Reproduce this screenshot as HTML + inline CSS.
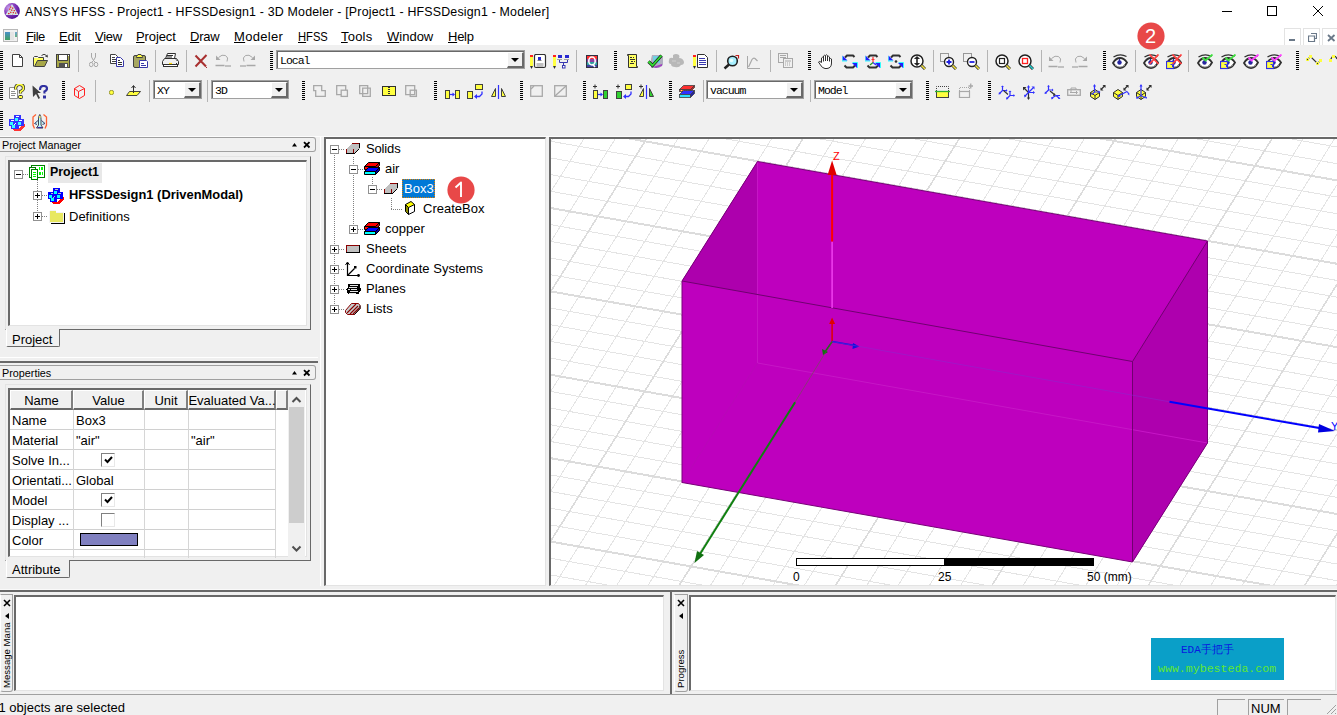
<!DOCTYPE html>
<html><head><meta charset="utf-8">
<style>
*{margin:0;padding:0;box-sizing:border-box}
html,body{width:1337px;height:715px;overflow:hidden;background:#f0f0f0;font-family:"Liberation Sans",sans-serif;color:#000}
.a{position:absolute}
.t{position:absolute;white-space:nowrap;font-size:13px;line-height:13px}
.menu u{text-decoration:underline;text-underline-offset:1px;text-decoration-thickness:1px}
.grip{position:absolute;width:3px;background:repeating-linear-gradient(#000 0 1px,transparent 1px 2px)}
.sep{position:absolute;width:2px;border-left:1px solid #a0a0a0;border-right:1px solid #fff}
.sunk{position:absolute;border:1px solid;border-color:#a0a0a0 #fff #fff #a0a0a0}
.sunk>div.in{position:absolute;left:0;top:0;right:0;bottom:0;border:1px solid;border-color:#696969 #e3e3e3 #e3e3e3 #696969;background:#fff}
.combo{position:absolute;background:#fff;border:1px solid;border-color:#808080 #fff #fff #808080;font-family:"Liberation Mono",monospace;font-size:12px}
.combo:before{content:"";position:absolute;left:0;top:0;right:0;bottom:0;border:1px solid;border-color:#404040 #e3e3e3 #e3e3e3 #404040}
.combo .btn{position:absolute;right:1px;top:1px;bottom:1px;width:16px;background:#f0f0f0;border:1px solid;border-color:#fff #404040 #404040 #fff}
.combo .btn:after{content:"";position:absolute;left:3px;top:5px;border-left:4px solid transparent;border-right:4px solid transparent;border-top:4px solid #000}
.combo span{position:absolute;left:3px;top:2px}
.hdr{position:absolute;border:1px solid #a0a0a0;border-radius:0 3px 3px 0;border-left:none;background:#f0f0f0;font-size:11.5px}
.tab{position:absolute;background:#f0f0f0;border:1px solid #a0a0a0;border-top:none;box-shadow:1px 1px 0 #696969;font-size:13px}
.pm{position:absolute;width:9px;height:9px;border:1px solid #919191;background:#fff}
.pm:before{content:"";position:absolute;left:1px;top:3px;width:5px;height:1px;background:#000}
.pm.p:after{content:"";position:absolute;left:3px;top:1px;width:1px;height:5px;background:#000}
.dv{position:absolute;width:1px;background:repeating-linear-gradient(#808080 0 1px,transparent 1px 2px)}
.dh{position:absolute;height:1px;background:repeating-linear-gradient(90deg,#808080 0 1px,transparent 1px 2px)}
</style></head>
<body>
<!-- TITLE BAR -->
<div class="a" style="left:0;top:0;width:1337px;height:45px;background:#fff"></div>
<div id="title">
<svg class="a" style="left:4px;top:3px" width="16" height="16" viewBox="0 0 16 16">
<defs><radialGradient id="ag" cx="30%" cy="30%" r="80%"><stop offset="0" stop-color="#c8a0e8"/><stop offset="0.45" stop-color="#8a40c0"/><stop offset="1" stop-color="#4a0890"/></radialGradient></defs>
<circle cx="8" cy="8" r="7.9" fill="url(#ag)"/>
<path d="M8 1L14.5 12H1.5Z" fill="#d0e8e8"/>
<path d="M7 3.5L5 8M9 4.5L6 11M10.5 7L8.5 11.5M12 9.5L11 11.5M5 10L4 12" stroke="#e02020" stroke-width="1.3" stroke-dasharray="1.3 1"/>
</svg>
<div class="t" style="left:25px;top:6px;font-size:12.4px;letter-spacing:0.19px;color:#000">ANSYS HFSS - Project1 - HFSSDesign1 - 3D Modeler - [Project1 - HFSSDesign1 - Modeler]</div>
<div class="a" style="left:1222px;top:11px;width:10px;height:1px;background:#000"></div>
<div class="a" style="left:1267px;top:6px;width:10px;height:10px;border:1px solid #000"></div>
<svg class="a" style="left:1313px;top:6px" width="10" height="10"><path d="M0 0L10 10M10 0L0 10" stroke="#000" stroke-width="1"/></svg>
<!-- menu -->
<svg class="a" style="left:3px;top:29px" width="15" height="13"><defs><linearGradient id="mg" x1="0" y1="0" x2="0" y2="1"><stop offset="0" stop-color="#4a90c8"/><stop offset="1" stop-color="#40a060"/></linearGradient></defs><rect x="0.5" y="0.5" width="14" height="12" fill="#f0f0f0" stroke="#b8b8b8"/><rect x="2" y="3" width="5" height="8" fill="url(#mg)"/><rect x="7" y="3" width="4" height="8" fill="#e4e4e4"/><rect x="12" y="3" width="2" height="5" fill="url(#mg)" opacity="0.8"/></svg>
<div class="t menu" style="left:26px;top:30px;letter-spacing:-0.6px"><u>F</u>ile</div>
<div class="t menu" style="left:59px;top:30px;letter-spacing:-0.15px"><u>E</u>dit</div>
<div class="t menu" style="left:95px;top:30px;letter-spacing:-0.3px"><u>V</u>iew</div>
<div class="t menu" style="left:136px;top:30px;letter-spacing:-0.1px"><u>P</u>roject</div>
<div class="t menu" style="left:190px;top:30px;letter-spacing:-0.2px"><u>D</u>raw</div>
<div class="t menu" style="left:234px;top:30px;letter-spacing:0.3px"><u>M</u>odeler</div>
<div class="t menu" style="left:298px;top:30px;transform:scaleX(0.86);transform-origin:0 0"><u>H</u>FSS</div>
<div class="t menu" style="left:341px;top:30px;letter-spacing:0.2px"><u>T</u>ools</div>
<div class="t menu" style="left:387px;top:30px;letter-spacing:0px"><u>W</u>indow</div>
<div class="t menu" style="left:448px;top:30px;letter-spacing:-0.25px"><u>H</u>elp</div>
<div class="a" style="left:1284px;top:28px;width:17px;height:17px;border:1px solid #e3e3e3;border-bottom:none"></div><div class="a" style="left:1303px;top:28px;width:17px;height:17px;border:1px solid #e3e3e3;border-bottom:none"></div><div class="a" style="left:1322px;top:28px;width:17px;height:17px;border:1px solid #e3e3e3;border-bottom:none"></div><div class="a" style="left:1289px;top:39px;width:6px;height:2px;background:#6a7888"></div>
<svg class="a" style="left:1308px;top:33px" width="9" height="9"><path d="M3 0.5h5.5v5h-2M0.5 3h6v5.5h-6z" fill="none" stroke="#6a7888" stroke-width="1.2"/></svg>
<svg class="a" style="left:1327px;top:34px" width="9" height="8"><path d="M1 1L7.5 7M7.5 1L1 7" stroke="#6a7888" stroke-width="1.8"/></svg>
</div>
<!-- TOOLBARS -->
<div class="grip" style="left:0px;top:51px;height:20px"></div><svg class="a" style="left:12px;top:54px" width="11" height="13" viewBox="0 0 11 13"><path d="M0.5 0.5H7.5L10.5 3.5V12.5H0.5Z" fill="#fff" stroke="#404040"/><path d="M7.5 0.5V3.5H10.5" fill="none" stroke="#404040"/></svg><svg class="a" style="left:33px;top:53px" width="16" height="14" viewBox="0 0 16 14"><path d="M0.5 13.5V4.5L1.5 3.5H4.5L5.5 4.5H10.5V7.5" fill="#f4f4f4" stroke="#404040"/><path d="M1 5H10V8H4L1 13Z" fill="#ffff60"/><path d="M1.5 13.5L4.5 7.5H14.5L11.5 13.5Z" fill="#a8a848" stroke="#404040"/><path d="M8.5 2.5Q11 0 13.5 2.5" fill="none" stroke="#404040"/><path d="M12 3.5L15 4.5L14.5 1.5Z" fill="#404040"/></svg><svg class="a" style="left:56px;top:54px" width="14" height="14" viewBox="0 0 14 14"><rect x="0.5" y="0.5" width="13" height="13" fill="#a8a848" stroke="#404040"/><rect x="2.5" y="0.5" width="9" height="6" fill="#fff" stroke="#404040"/><rect x="3" y="9" width="9" height="5" fill="#505050"/><rect x="9" y="10" width="2" height="3" fill="#fff"/><rect x="12" y="1" width="1" height="1" fill="#fff"/></svg><div class="a" style="left:78px;top:50px;width:1px;height:22px;background:#b4b4b4"></div><svg class="a" style="left:89px;top:53px" width="10" height="15" viewBox="0 0 10 15"><path d="M2.5 0V4L4.5 7.5L6.5 4V0" fill="none" stroke="#a8a8a8"/><path d="M4.5 7.5L2.5 9.5M4.5 7.5L6.5 9.5" stroke="#a8a8a8"/><ellipse cx="2.2" cy="11.5" rx="1.8" ry="2.2" fill="none" stroke="#a8a8a8"/><ellipse cx="7" cy="11.5" rx="1.8" ry="2.2" fill="none" stroke="#a8a8a8"/></svg><svg class="a" style="left:110px;top:54px" width="15" height="13" viewBox="0 0 15 13"><path d="M0.5 0.5H5.5L7.5 2.5V9.5H0.5Z" fill="#fff" stroke="#404040"/><path d="M2 3.5H5M2 5.5H6M2 7.5H6" stroke="#404040"/><path d="M6.5 3.5H10.5L13.5 6.5V12.5H6.5Z" fill="#fff" stroke="#3838a8"/><path d="M8 6.5H10M8 8.5H12M8 10.5H12" stroke="#303030"/></svg><svg class="a" style="left:133px;top:54px" width="15" height="14" viewBox="0 0 15 14"><rect x="0.5" y="1.5" width="12" height="12" rx="1.5" fill="#a8a860" stroke="#404040"/><path d="M3.5 3.5H9.5V2.5L8 0.5H5L3.5 2.5Z" fill="#ffff40" stroke="#404040"/><path d="M6.5 6.5H13.5L14.5 7.5V13.5H6.5Z" fill="#fff" stroke="#3838a8"/><path d="M8 9.5H11M8 11.5H13" stroke="#3838a8"/></svg><div class="a" style="left:155px;top:50px;width:1px;height:22px;background:#b4b4b4"></div><svg class="a" style="left:162px;top:53px" width="17" height="15" viewBox="0 0 17 15"><path d="M3.5 5.5L5.5 0.5H13.5L12.5 5.5" fill="#fff" stroke="#303030"/><path d="M5 2.5H11M4.5 4H10" stroke="#303030"/><path d="M0.5 11.5V8.5L2.5 5.5H14.5L16.5 8.5V11.5Z" fill="#f0f0f0" stroke="#303030"/><rect x="1.5" y="11.5" width="14" height="2" fill="#fff" stroke="#303030"/><path d="M7 10.5H10" stroke="#ffd800" stroke-width="1.2"/><path d="M14 6.5L15.5 8M14 10L15.5 11.5" stroke="#303030"/></svg><div class="a" style="left:186px;top:50px;width:1px;height:22px;background:#b4b4b4"></div><svg class="a" style="left:194px;top:54px" width="14" height="14" viewBox="0 0 14 14"><path d="M1.5 1.5L12 12.5M12.5 1L1.5 12.5" stroke="#a83030" stroke-width="2"/><rect x="12" y="13" width="1" height="1" fill="#a83030"/></svg><svg class="a" style="left:215px;top:54px" width="16" height="14" viewBox="0 0 16 14"><path d="M3.5 3.5Q7 0 10.5 1.5Q14 3.5 12 7.5" fill="none" stroke="#a8a8a8"/><path d="M1 1.5V6H5.5Z" fill="#a8a8a8"/><path d="M0.5 11.5H9.5M11 11V13M13 11V13M15 11V13" stroke="#a8a8a8" stroke-width="1.3"/></svg><svg class="a" style="left:240px;top:54px" width="16" height="14" viewBox="0 0 16 14"><path d="M12.5 3.5Q9 0 5.5 1.5Q2 3.5 4 7.5" fill="none" stroke="#a8a8a8"/><path d="M15 1.5V6H10.5Z" fill="#a8a8a8"/><path d="M6.5 11.5H15.5M1 11V13M3 11V13M5 11V13" stroke="#a8a8a8" stroke-width="1.3"/></svg><div class="grip" style="left:270px;top:51px;height:20px"></div><div class="a" style="left:276px;top:50px;width:249px;height:19px;background:#fff;border:1px solid #a0a0a0"><div class="a" style="left:0;top:0;right:0;bottom:0;border-left:1px solid #696969;border-top:1px solid #696969"></div><div class="a" style="left:3px;top:2.5px;font-family:'Liberation Mono',monospace;font-size:11.5px;line-height:14px;letter-spacing:-1px">Local</div><div class="a" style="right:0;top:1px;width:17px;bottom:0;background:#f0f0f0;border-right:2px solid #696969;border-bottom:2px solid #696969;border-left:1px solid #fff;border-top:1px solid #fff"></div><div class="a" style="right:5px;top:7px;border-left:4px solid transparent;border-right:4px solid transparent;border-top:4px solid #000;width:0;height:0"></div></div><svg class="a" style="left:530px;top:54px" width="17" height="15" viewBox="0 0 17 15"><rect x="0" y="1" width="3" height="2" fill="#ff2020"/><rect x="0" y="3" width="3" height="9" fill="#ffff40"/><path d="M0 12H3L1.5 15Z" fill="#303030"/><rect x="4.5" y="0.5" width="11" height="13" rx="1.5" fill="#fff" stroke="#303030" stroke-width="1.2"/><rect x="8" y="3" width="3" height="3" fill="#2828d0"/><rect x="7.5" y="6" width="4" height="1" fill="#808080"/><path d="M6.5 10H13.5M6.5 12H13.5" stroke="#808080"/></svg><svg class="a" style="left:553px;top:54px" width="17" height="15" viewBox="0 0 17 15"><rect x="0" y="1" width="3" height="2" fill="#ff2020"/><rect x="0" y="3" width="3" height="9" fill="#ffff40"/><path d="M0 12H3L1.5 15Z" fill="#303030"/><rect x="5" y="1" width="4" height="3" fill="#2828d0"/><rect x="12" y="1" width="4" height="3" fill="#2828d0"/><path d="M4 5.5H9M11 5.5H16" stroke="#a0a0a0"/><path d="M6.5 6V8.5H14.5V6M10.5 8.5V11" fill="none" stroke="#3838b0"/><rect x="9.5" y="11.5" width="2.5" height="2.5" fill="#fff" stroke="#3838b0"/></svg><div class="a" style="left:576px;top:50px;width:1px;height:22px;background:#b4b4b4"></div><svg class="a" style="left:586px;top:55px" width="12" height="13" viewBox="0 0 12 13"><rect x="0" y="0" width="12" height="13" fill="#303040"/><rect x="1" y="1" width="10" height="3" fill="#ff3030"/><rect x="1" y="4" width="10" height="3" fill="#9040a0"/><rect x="1" y="7" width="10" height="3" fill="#30a0a0"/><rect x="1" y="10" width="10" height="2" fill="#4040a0"/><ellipse cx="6" cy="6" rx="3.2" ry="4" fill="none" stroke="#fff" stroke-width="1.6"/><path d="M6.5 9L9 12" stroke="#fff" stroke-width="1.6"/></svg><div class="grip" style="left:614px;top:51px;height:20px"></div><svg class="a" style="left:626px;top:54px" width="13" height="15" viewBox="0 0 13 15"><path d="M1.5 0.5H10.5V12.5H11.5V13.5H2.5V1.5H1.5Z" fill="#ffff60" stroke="#303030"/><path d="M4 3.5H6M7 3.5H8M4 5.5H9M5 7.5H7M8 7.5H9M4 9.5H8" stroke="#303030"/></svg><svg class="a" style="left:647px;top:54px" width="17" height="15" viewBox="0 0 17 15"><path d="M5 1H14L16 3V11L12 14H4V5Z" fill="#b0b0c0"/><path d="M6 2H13V9H6Z" fill="#70d0e0"/><path d="M6 13L15 10V12L9 14Z" fill="#a040c0"/><path d="M1.5 7.5L5.5 11.5L14.5 1.5" fill="none" stroke="#202020" stroke-width="3.2"/><path d="M1.5 7.5L5.5 11.5L14.5 1.5" fill="none" stroke="#30e030" stroke-width="1.8"/></svg><svg class="a" style="left:668px;top:53px" width="17" height="15" viewBox="0 0 17 15"><path d="M5 2Q8 0 11 2Q12 4 11 5Q15 5 16 9Q16 12 13 12Q11 15 7 14Q3 14 3 11Q0 11 1 7Q1 4 5 5Z" fill="#b8b8b8"/><path d="M4 8H8M9 10H12" stroke="#d0d0d0"/></svg><svg class="a" style="left:693px;top:54px" width="16" height="15" viewBox="0 0 16 15"><rect x="0" y="1" width="3" height="2" fill="#ff2020"/><rect x="0" y="3" width="3" height="9" fill="#ffff40"/><path d="M0 12H3L1.5 15Z" fill="#303030"/><path d="M4.5 0.5H11.5L14.5 3.5V13.5H4.5Z" fill="#fff" stroke="#303030"/><path d="M6 4.5H12M6 6.5H13M6 8.5H13M6 10.5H13" stroke="#3838b0"/></svg><div class="a" style="left:716px;top:50px;width:1px;height:22px;background:#b4b4b4"></div><svg class="a" style="left:723px;top:55px" width="17" height="15" viewBox="0 0 17 15"><circle cx="9.5" cy="6" r="4.8" fill="#a8f0ff" stroke="#202020" stroke-width="1.6"/><circle cx="8.5" cy="5.5" r="1.8" fill="#e8ffff"/><path d="M6 9.5L1.5 13.5" stroke="#202020" stroke-width="2.4"/><path d="M12.5 0.5H15.5V3.5" fill="none" stroke="#c02020" stroke-width="1.2"/></svg><svg class="a" style="left:747px;top:56px" width="14" height="13" viewBox="0 0 14 13"><path d="M0.5 0V12.5H13" fill="none" stroke="#a8a8a8"/><path d="M1.5 11L5 3.5Q6.5 1.5 8 2.5L10.5 5" fill="none" stroke="#a8a8a8" stroke-width="1.2"/></svg><div class="a" style="left:770px;top:50px;width:1px;height:22px;background:#b4b4b4"></div><svg class="a" style="left:778px;top:53px" width="15" height="15" viewBox="0 0 15 15"><rect x="0.5" y="0.5" width="9" height="9" fill="#f0f0f0" stroke="#a8a8a8"/><path d="M2 2.5H8M2 4.5H8" stroke="#a8a8a8"/><rect x="5.5" y="5.5" width="9" height="9" fill="#f0f0f0" stroke="#a8a8a8"/><path d="M7 8H13M7 10H8M9 10H10M11 10H12M7 12H8M9 12H10M11 12H12" stroke="#a8a8a8"/></svg><div class="grip" style="left:808px;top:51px;height:20px"></div><svg class="a" style="left:818px;top:54px" width="15" height="16" viewBox="0 0 15 16"><path d="M3.5 8.5V4Q4.5 2.5 5.5 4V2Q6.5 0.5 7.5 2V1.5Q8.5 0 9.5 1.5V3Q10.5 1.5 11.5 3V5Q12.5 4 13.5 5V9Q13.5 14 9 14.5H7Q4 14 2.5 11L0.5 8Q1.5 6.5 3.5 8.5Z" fill="#fff" stroke="#303030"/><path d="M5.5 4V7.5M7.5 2V7M9.5 3V7M11.5 5V7.5" stroke="#303030"/></svg><svg class="a" style="left:842px;top:54px" width="16" height="15" viewBox="0 0 16 15"><path d="M3 3.5L5 1.5H11L12.5 3" fill="none" stroke="#303030" stroke-width="2"/><path d="M0.5 1.5V6.5H5.5Z" fill="#2020ff"/><path d="M0 2V7H5" fill="none" stroke="#00ffff" stroke-width="0.8"/><path d="M2.5 11.5L4.5 13.5H11L13 11.5" fill="none" stroke="#303030" stroke-width="2"/><path d="M15 14V9H10Z" fill="#2020ff"/><path d="M15.5 14V8.5H10.5" fill="none" stroke="#00ffff" stroke-width="0.8"/></svg><svg class="a" style="left:865px;top:54px" width="16" height="15" viewBox="0 0 16 15"><path d="M3 3.5L5 1.5H11L12.5 3" fill="none" stroke="#303030" stroke-width="2"/><path d="M0.5 1.5V6.5H5.5Z" fill="#2020ff"/><path d="M0 2V7H5" fill="none" stroke="#00ffff" stroke-width="0.8"/><path d="M2.5 11.5L4.5 13.5H11L13 11.5" fill="none" stroke="#303030" stroke-width="2"/><path d="M15 14V9H10Z" fill="#2020ff"/><path d="M15.5 14V8.5H10.5" fill="none" stroke="#00ffff" stroke-width="0.8"/><path d="M8 3V8.5" stroke="#ff3030" stroke-width="1.2"/><path d="M6.5 5.5H9.5" stroke="#ff3030"/><path d="M8 8.5L5 11" stroke="#20a020" stroke-width="1.2"/><path d="M8 8.5L11 11" stroke="#3030ff" stroke-width="1.2"/></svg><svg class="a" style="left:888px;top:54px" width="16" height="15" viewBox="0 0 16 15"><path d="M3 3.5L5 1.5H11L12.5 3" fill="none" stroke="#303030" stroke-width="2"/><path d="M0.5 1.5V6.5H5.5Z" fill="#2020ff"/><path d="M0 2V7H5" fill="none" stroke="#00ffff" stroke-width="0.8"/><path d="M2.5 11.5L4.5 13.5H11L13 11.5" fill="none" stroke="#303030" stroke-width="2"/><path d="M15 14V9H10Z" fill="#2020ff"/><path d="M15.5 14V8.5H10.5" fill="none" stroke="#00ffff" stroke-width="0.8"/><circle cx="8" cy="7.5" r="1.3" fill="#303030"/></svg><svg class="a" style="left:910px;top:54px" width="16" height="16" viewBox="0 0 16 16"><circle cx="7" cy="7" r="6" fill="#fff" stroke="#202020" stroke-width="1.5"/><path d="M7 3V11" stroke="#202020" stroke-width="1.6"/><path d="M4.5 5L7 2.5L9.5 5M4.5 9L7 11.5L9.5 9" fill="#202020" stroke="#202020"/><path d="M11.5 11.5L15 15" stroke="#303030" stroke-width="3"/><path d="M11.5 11.5L15 15" stroke="#f0e040" stroke-width="1.6"/></svg><div class="a" style="left:933px;top:50px;width:1px;height:22px;background:#b4b4b4"></div><svg class="a" style="left:940px;top:53px" width="17" height="17" viewBox="0 0 17 17"><rect x="0.5" y="0.5" width="8" height="8" fill="none" stroke="#404040" stroke-dasharray="1 1"/><circle cx="9" cy="9" r="4.5" fill="#fff" stroke="#202020" stroke-width="1.4"/><path d="M6.5 9H11.5M9 6.5V11.5" stroke="#2020e0" stroke-width="1.8"/><path d="M12.5 12.5L16 16" stroke="#303030" stroke-width="3"/><path d="M12.5 12.5L16 16" stroke="#f0e040" stroke-width="1.6"/></svg><svg class="a" style="left:963px;top:53px" width="17" height="17" viewBox="0 0 17 17"><rect x="0.5" y="0.5" width="8" height="8" fill="none" stroke="#404040" stroke-dasharray="1 1"/><circle cx="9" cy="9" r="4.5" fill="#fff" stroke="#202020" stroke-width="1.4"/><path d="M6.5 9H11.5" stroke="#2020e0" stroke-width="1.8"/><path d="M12.5 12.5L16 16" stroke="#303030" stroke-width="3"/><path d="M12.5 12.5L16 16" stroke="#f0e040" stroke-width="1.6"/></svg><div class="a" style="left:987px;top:50px;width:1px;height:22px;background:#b4b4b4"></div><svg class="a" style="left:995px;top:54px" width="16" height="16" viewBox="0 0 16 16"><circle cx="7" cy="7" r="6" fill="#fff" stroke="#202020" stroke-width="1.5"/><rect x="4.5" y="4.5" width="5" height="5" fill="none" stroke="#202020" stroke-width="1.2"/><path d="M11.5 11.5L15 15" stroke="#303030" stroke-width="3"/><path d="M11.5 11.5L15 15" stroke="#f0e040" stroke-width="1.6"/></svg><svg class="a" style="left:1018px;top:54px" width="16" height="16" viewBox="0 0 16 16"><circle cx="7" cy="7" r="6" fill="#fff" stroke="#202020" stroke-width="1.5"/><rect x="4.5" y="4.5" width="5" height="5" fill="none" stroke="#ff2020" stroke-width="1.3"/><path d="M11.5 11.5L15 15" stroke="#303030" stroke-width="3"/><path d="M11.5 11.5L15 15" stroke="#20d0d0" stroke-width="1.6"/></svg><div class="a" style="left:1041px;top:50px;width:1px;height:22px;background:#b4b4b4"></div><svg class="a" style="left:1048px;top:55px" width="16" height="14" viewBox="0 0 16 14"><path d="M3.5 3.5Q7 0 10.5 1.5Q14 3.5 12 7.5" fill="none" stroke="#a8a8a8"/><path d="M1 1.5V6H5.5Z" fill="#a8a8a8"/><path d="M0.5 11.5H9.5M11 11V13M13 11V13M15 11V13" stroke="#a8a8a8" stroke-width="1.3"/></svg><svg class="a" style="left:1072px;top:55px" width="16" height="14" viewBox="0 0 16 14"><path d="M12.5 3.5Q9 0 5.5 1.5Q2 3.5 4 7.5" fill="none" stroke="#a8a8a8"/><path d="M15 1.5V6H10.5Z" fill="#a8a8a8"/><path d="M6.5 11.5H15.5M1 11V13M3 11V13M5 11V13" stroke="#a8a8a8" stroke-width="1.3"/></svg><div class="grip" style="left:1103px;top:51px;height:20px"></div><svg class="a" style="left:1112px;top:54px" width="17" height="16" viewBox="0 0 17 16"><path d="M1.5 3Q8 -1 14.5 2.5" fill="none" stroke="#303030" stroke-width="1.4"/><path d="M1 9Q4 4 8 4Q12 4 15 8.5Q12 14 8 14Q4 14 1 9Z" fill="#fff" stroke="#303030" stroke-width="1.8"/><path d="M3 11Q8 15 13 11" fill="none" stroke="#a0a0a0"/><circle cx="7.5" cy="8.5" r="2.2" fill="#2828a0"/><path d="M7.5 5V8" stroke="#2828a0" stroke-width="1.2"/></svg><div class="a" style="left:1135px;top:50px;width:1px;height:22px;background:#b4b4b4"></div><svg class="a" style="left:1143px;top:54px" width="17" height="16" viewBox="0 0 17 16"><path d="M1.5 3Q8 -1 14.5 2.5" fill="none" stroke="#303030" stroke-width="1.4"/><path d="M1 9Q4 4 8 4Q12 4 15 8.5Q12 14 8 14Q4 14 1 9Z" fill="#fff" stroke="#303030" stroke-width="1.8"/><path d="M3 11Q8 15 13 11" fill="none" stroke="#a0a0a0"/><circle cx="7.5" cy="8.5" r="2.2" fill="#2828a0"/><path d="M7.5 5V8" stroke="#2828a0" stroke-width="1.2"/><path d="M6.5 0.5L15.5 10M15.5 0.5L6.5 10" stroke="#ff4040" stroke-width="1.8"/></svg><svg class="a" style="left:1166px;top:54px" width="17" height="16" viewBox="0 0 17 16"><path d="M1.5 3Q8 -1 14.5 2.5" fill="none" stroke="#303030" stroke-width="1.4"/><path d="M1 9Q4 4 8 4Q12 4 15 8.5Q12 14 8 14Q4 14 1 9Z" fill="#fff" stroke="#303030" stroke-width="1.8"/><path d="M3 11Q8 15 13 11" fill="none" stroke="#a0a0a0"/><circle cx="7.5" cy="8.5" r="2.2" fill="#2828a0"/><path d="M7.5 5V8" stroke="#2828a0" stroke-width="1.2"/><rect x="0.5" y="7.5" width="7" height="7" fill="#ffff40" stroke="#3030e0" stroke-width="1.2"/><rect x="2" y="9" width="2.5" height="2.5" fill="#3030e0" opacity="0"/><path d="M4.5 10.5H6.5V13" fill="none" stroke="#3030e0"/><path d="M6.5 0.5L15.5 10M15.5 0.5L6.5 10" stroke="#ff4040" stroke-width="1.8"/></svg><div class="a" style="left:1188px;top:50px;width:1px;height:22px;background:#b4b4b4"></div><svg class="a" style="left:1197px;top:54px" width="17" height="16" viewBox="0 0 17 16"><path d="M1.5 3Q8 -1 14.5 2.5" fill="none" stroke="#303030" stroke-width="1.4"/><path d="M1 9Q4 4 8 4Q12 4 15 8.5Q12 14 8 14Q4 14 1 9Z" fill="#fff" stroke="#303030" stroke-width="1.8"/><path d="M3 11Q8 15 13 11" fill="none" stroke="#a0a0a0"/><circle cx="7.5" cy="8.5" r="2.2" fill="#2828a0"/><path d="M7.5 5V8" stroke="#2828a0" stroke-width="1.2"/><path d="M5.5 3.5L8.5 6.5L15.5 0.5" fill="none" stroke="#40e040" stroke-width="1.8"/></svg><svg class="a" style="left:1220px;top:54px" width="17" height="16" viewBox="0 0 17 16"><path d="M1.5 3Q8 -1 14.5 2.5" fill="none" stroke="#303030" stroke-width="1.4"/><path d="M1 9Q4 4 8 4Q12 4 15 8.5Q12 14 8 14Q4 14 1 9Z" fill="#fff" stroke="#303030" stroke-width="1.8"/><path d="M3 11Q8 15 13 11" fill="none" stroke="#a0a0a0"/><circle cx="7.5" cy="8.5" r="2.2" fill="#2828a0"/><path d="M7.5 5V8" stroke="#2828a0" stroke-width="1.2"/><rect x="0.5" y="7.5" width="7" height="7" fill="#ffff40" stroke="#3030e0" stroke-width="1.2"/><rect x="2" y="9" width="2.5" height="2.5" fill="#3030e0" opacity="0"/><path d="M4.5 10.5H6.5V13" fill="none" stroke="#3030e0"/><path d="M5.5 3.5L8.5 6.5L15.5 0.5" fill="none" stroke="#40e040" stroke-width="1.8"/></svg><svg class="a" style="left:1243px;top:54px" width="17" height="16" viewBox="0 0 17 16"><path d="M1.5 3Q8 -1 14.5 2.5" fill="none" stroke="#303030" stroke-width="1.4"/><path d="M1 9Q4 4 8 4Q12 4 15 8.5Q12 14 8 14Q4 14 1 9Z" fill="#fff" stroke="#303030" stroke-width="1.8"/><path d="M3 11Q8 15 13 11" fill="none" stroke="#a0a0a0"/><circle cx="7.5" cy="8.5" r="2.2" fill="#2828a0"/><path d="M7.5 5V8" stroke="#2828a0" stroke-width="1.2"/><path d="M5.5 3.5L8.5 6.5L15.5 0.5" fill="none" stroke="#ff40ff" stroke-width="1.8"/></svg><svg class="a" style="left:1266px;top:54px" width="17" height="16" viewBox="0 0 17 16"><path d="M1.5 3Q8 -1 14.5 2.5" fill="none" stroke="#303030" stroke-width="1.4"/><path d="M1 9Q4 4 8 4Q12 4 15 8.5Q12 14 8 14Q4 14 1 9Z" fill="#fff" stroke="#303030" stroke-width="1.8"/><path d="M3 11Q8 15 13 11" fill="none" stroke="#a0a0a0"/><circle cx="7.5" cy="8.5" r="2.2" fill="#2828a0"/><path d="M7.5 5V8" stroke="#2828a0" stroke-width="1.2"/><rect x="0.5" y="7.5" width="7" height="7" fill="#ffff40" stroke="#3030e0" stroke-width="1.2"/><rect x="2" y="9" width="2.5" height="2.5" fill="#3030e0" opacity="0"/><path d="M4.5 10.5H6.5V13" fill="none" stroke="#3030e0"/><path d="M5.5 3.5L8.5 6.5L15.5 0.5" fill="none" stroke="#ff40ff" stroke-width="1.8"/></svg><div class="grip" style="left:1296px;top:51px;height:20px"></div><svg class="a" style="left:1306px;top:55px" width="16" height="11" viewBox="0 0 16 11"><path d="M1.5 4.5L4.5 1.5L11.5 8.5L14.5 5.5" fill="none" stroke="#303030" stroke-width="1.2"/><rect x="0" y="3" width="3" height="3" fill="#ffff40"/><rect x="3" y="0" width="3" height="3" fill="#ffff40"/><rect x="10" y="7" width="3" height="3" fill="#ffff40"/><rect x="13" y="4" width="3" height="3" fill="#ffff40"/><circle cx="1.5" cy="4.5" r="0.7" fill="#303030"/><circle cx="11.5" cy="8.5" r="0.7" fill="#303030"/></svg><svg class="a" style="left:1329px;top:55px" width="8" height="11" viewBox="0 0 8 11"><path d="M1.5 5Q3 1 5 1Q7 1 8 4" fill="none" stroke="#303030" stroke-width="1.2"/><rect x="0" y="4" width="3" height="3" fill="#ffff40"/><rect x="3" y="0" width="3" height="3" fill="#ffff40"/></svg><div class="grip" style="left:0px;top:81px;height:20px"></div><svg class="a" style="left:9px;top:84px" width="16" height="16" viewBox="0 0 16 16"><path d="M0.5 3.5H6.5L8.5 5.5V14.5H0.5Z" fill="#fff" stroke="#909090"/><path d="M2 7.5H6M2 9.5H7M2 11.5H6" stroke="#909090"/><path d="M6.5 5.5Q6.5 0.5 10.5 0.5Q14.5 0.5 14.5 4Q14.5 6.5 11.5 7.5V9.5" fill="none" stroke="#303030" stroke-width="3.2"/><path d="M6.5 5.5Q6.5 0.5 10.5 0.5Q14.5 0.5 14.5 4Q14.5 6.5 11.5 7.5V9.5" fill="none" stroke="#ffff40" stroke-width="1.6"/><rect x="9.5" y="11.5" width="4" height="3" rx="1" fill="#ffff40" stroke="#303030"/></svg><svg class="a" style="left:32px;top:85px" width="16" height="15" viewBox="0 0 16 15"><path d="M0.5 0.5L9 8H5.5L8 13L6.5 14L4 9L1 12Z" fill="#404040"/><path d="M8 5Q8 1 11.5 1Q15 1 15 3.5Q15 5.5 12.5 6.5V8.5" fill="none" stroke="#3030a0" stroke-width="2.2"/><rect x="11" y="10.5" width="3" height="3" fill="#3030a0"/></svg><div class="grip" style="left:62px;top:81px;height:20px"></div><svg class="a" style="left:74px;top:85px" width="12" height="14" viewBox="0 0 12 14"><path d="M0.5 3.5L5.5 0.5L10.5 3.5V10.5L5.5 13.5L0.5 10.5Z M0.5 3.5L4.5 6.5L10.5 3.5 M4.5 6.5V13" fill="none" stroke="#ff2020"/></svg><div class="a" style="left:95px;top:80px;width:1px;height:22px;background:#b4b4b4"></div><svg class="a" style="left:109px;top:90px" width="5" height="5" viewBox="0 0 5 5"><circle cx="2.5" cy="2.5" r="2.2" fill="#ffff40" stroke="#606000" stroke-width="0.6"/></svg><svg class="a" style="left:126px;top:85px" width="15" height="11" viewBox="0 0 15 11"><path d="M3.5 6.5H14.5L11 10.5H0.5Z" fill="#ffff40" stroke="#303030" stroke-width="0.9"/><path d="M7.5 8V1" stroke="#303030"/><path d="M5.5 3L7.5 0.5L9.5 3" fill="none" stroke="#303030"/></svg><div class="a" style="left:149px;top:80px;width:1px;height:22px;background:#b4b4b4"></div><div class="a" style="left:153px;top:80px;width:49px;height:19px;background:#fff;border:1px solid #a0a0a0"><div class="a" style="left:0;top:0;right:0;bottom:0;border-left:1px solid #696969;border-top:1px solid #696969"></div><div class="a" style="left:3px;top:2.5px;font-family:'Liberation Mono',monospace;font-size:11.5px;line-height:14px;letter-spacing:-1px">XY</div><div class="a" style="right:0;top:1px;width:17px;bottom:0;background:#f0f0f0;border-right:2px solid #696969;border-bottom:2px solid #696969;border-left:1px solid #fff;border-top:1px solid #fff"></div><div class="a" style="right:5px;top:7px;border-left:4px solid transparent;border-right:4px solid transparent;border-top:4px solid #000;width:0;height:0"></div></div><div class="a" style="left:207px;top:80px;width:1px;height:22px;background:#b4b4b4"></div><div class="a" style="left:211px;top:80px;width:78px;height:19px;background:#fff;border:1px solid #a0a0a0"><div class="a" style="left:0;top:0;right:0;bottom:0;border-left:1px solid #696969;border-top:1px solid #696969"></div><div class="a" style="left:3px;top:2.5px;font-family:'Liberation Mono',monospace;font-size:11.5px;line-height:14px;letter-spacing:-1px">3D</div><div class="a" style="right:0;top:1px;width:17px;bottom:0;background:#f0f0f0;border-right:2px solid #696969;border-bottom:2px solid #696969;border-left:1px solid #fff;border-top:1px solid #fff"></div><div class="a" style="right:5px;top:7px;border-left:4px solid transparent;border-right:4px solid transparent;border-top:4px solid #000;width:0;height:0"></div></div><div class="grip" style="left:302px;top:81px;height:20px"></div><svg class="a" style="left:313px;top:85px" width="14" height="13" viewBox="0 0 14 13"><path d="M0.7 0.7H8.7V5.7H12.3V11.3H2.7V5.7H0.7Z" stroke="#a8a8a8" stroke-width="1.3" fill="none"/></svg><svg class="a" style="left:336px;top:85px" width="13" height="13" viewBox="0 0 13 13"><path d="M0.7 0.7H9.7V9.7H0.7Z" stroke="#a8a8a8" stroke-width="1.3" fill="none"/><rect x="5.2" y="5.2" width="6.2" height="6.2" fill="#f0f0f0" stroke="#a8a8a8" stroke-width="1.3"/></svg><svg class="a" style="left:359px;top:85px" width="13" height="13" viewBox="0 0 13 13"><path d="M0.7 0.7H8.7V8.7H0.7Z M3.7 3.2H11.3V11.3H3.7Z" stroke="#a8a8a8" stroke-width="1.3" fill="none"/></svg><svg class="a" style="left:382px;top:86px" width="14" height="10" viewBox="0 0 14 10"><rect x="0.5" y="0.5" width="13" height="9" fill="#ffff40" stroke="#303030"/><path d="M6.5 1V9M7.5 1V9" stroke="#303030" stroke-dasharray="1 1"/></svg><svg class="a" style="left:405px;top:85px" width="13" height="13" viewBox="0 0 13 13"><path d="M0.7 0.7H9.7V9.7H0.7Z" stroke="#a8a8a8" stroke-width="1.3" fill="none"/><rect x="5.2" y="5.2" width="6.2" height="6.2" fill="none" stroke="#a8a8a8" stroke-width="1.3"/></svg><div class="grip" style="left:434px;top:81px;height:20px"></div><svg class="a" style="left:445px;top:90px" width="15" height="9" viewBox="0 0 15 9"><rect x="0.5" y="0.5" width="4" height="8" fill="#ffff40" stroke="#404040"/><rect x="10.5" y="0.5" width="4" height="8" fill="#ffff40" stroke="#404040"/><path d="M5 4.5H9" stroke="#3030ff" stroke-width="1.2"/><path d="M7.5 2.5L10 4.5L7.5 6.5Z" fill="#3030ff"/></svg><svg class="a" style="left:467px;top:84px" width="16" height="15" viewBox="0 0 16 15"><rect x="8.5" y="0.5" width="7" height="5" fill="#ffff40" stroke="#404040"/><rect x="0.5" y="7.5" width="5" height="7" fill="#ffff40" stroke="#404040"/><path d="M15 7.5V10L12.5 12.5H8.5" fill="none" stroke="#3030ff" stroke-width="1.3"/><path d="M7 12.5L10 10V15Z" fill="#3030ff"/></svg><svg class="a" style="left:491px;top:85px" width="15" height="14" viewBox="0 0 15 14"><path d="M0.5 11.5L4.5 3.5V11.5Z" fill="#ffff40" stroke="#404040"/><path d="M14.5 11.5L10.5 3.5V11.5Z" fill="#ffff40" stroke="#404040"/><path d="M7.5 0V14" stroke="#3030ff" stroke-width="1.2"/></svg><div class="grip" style="left:520px;top:81px;height:20px"></div><svg class="a" style="left:530px;top:85px" width="13" height="12" viewBox="0 0 13 12"><rect x="0.7" y="0.7" width="11.6" height="10.6" fill="none" stroke="#a8a8a8" stroke-width="1.3"/><path d="M1 4L4 1" stroke="#a8a8a8" stroke-width="1.3"/></svg><svg class="a" style="left:554px;top:85px" width="13" height="12" viewBox="0 0 13 12"><rect x="0.7" y="0.7" width="11.6" height="10.6" fill="none" stroke="#a8a8a8" stroke-width="1.3"/><path d="M1 11L12 1" stroke="#a8a8a8" stroke-width="1.3"/></svg><div class="grip" style="left:583px;top:81px;height:20px"></div><svg class="a" style="left:593px;top:84px" width="15" height="15" viewBox="0 0 15 15"><path d="M0 2.5H4M2 0.5V4.5" stroke="#303030"/><rect x="0.5" y="6.5" width="4" height="8" fill="#ffff40" stroke="#404040"/><rect x="10.5" y="6.5" width="4" height="8" fill="#30d030" stroke="#404040"/><path d="M5 10.5H9" stroke="#3030ff" stroke-width="1.2"/><path d="M7.5 8.5L10 10.5L7.5 12.5Z" fill="#3030ff"/></svg><svg class="a" style="left:616px;top:84px" width="16" height="15" viewBox="0 0 16 15"><path d="M0 2.5H4M2 0.5V4.5" stroke="#303030"/><rect x="9.5" y="0.5" width="6" height="5" fill="#ffff40" stroke="#404040"/><rect x="0.5" y="7.5" width="5" height="7" fill="#30d030" stroke="#404040"/><path d="M15 7.5V10L12.5 12.5H8.5" fill="none" stroke="#3030ff" stroke-width="1.3"/><path d="M7 12.5L10 10V15Z" fill="#3030ff"/></svg><svg class="a" style="left:639px;top:84px" width="15" height="15" viewBox="0 0 15 15"><path d="M0 2.5H4M2 0.5V4.5" stroke="#303030"/><path d="M0.5 12.5L4.5 4.5V12.5Z" fill="#ffff40" stroke="#404040"/><path d="M14.5 12.5L10.5 4.5V12.5Z" fill="#30d030" stroke="#404040"/><path d="M7.5 1V15" stroke="#3030ff" stroke-width="1.2"/></svg><div class="grip" style="left:669px;top:81px;height:20px"></div><svg class="a" style="left:679px;top:85px" width="16" height="13" viewBox="0 0 16 13"><path d="M0.5 4.5L4.5 0.5H15.5L11.5 4.5Z" fill="#ff3030" stroke="#404040" stroke-width="0.8"/><rect x="0.5" y="4.5" width="11" height="2" fill="#ff3030" stroke="#404040" stroke-width="0.8"/><path d="M11.5 4.5L15.5 0.5V2.5L11.5 6.5Z" fill="#c02020" stroke="#404040" stroke-width="0.8"/><path d="M2 5.5H10" stroke="#ffff40" stroke-dasharray="1 1"/><path d="M0.5 9.5L4.5 5.5H15.5L11.5 9.5Z" fill="#3030ff" stroke="#404040" stroke-width="0.8"/><rect x="0.5" y="9.5" width="11" height="3" fill="#30e0ff" stroke="#404040" stroke-width="0.8"/><path d="M11.5 9.5L15.5 5.5V8.5L11.5 12.5Z" fill="#2020a0" stroke="#404040" stroke-width="0.8"/></svg><div class="a" style="left:703px;top:80px;width:1px;height:22px;background:#b4b4b4"></div><div class="a" style="left:706px;top:80px;width:98px;height:19px;background:#fff;border:1px solid #a0a0a0"><div class="a" style="left:0;top:0;right:0;bottom:0;border-left:1px solid #696969;border-top:1px solid #696969"></div><div class="a" style="left:3px;top:2.5px;font-family:'Liberation Mono',monospace;font-size:11.5px;line-height:14px;letter-spacing:-1px">vacuum</div><div class="a" style="right:0;top:1px;width:17px;bottom:0;background:#f0f0f0;border-right:2px solid #696969;border-bottom:2px solid #696969;border-left:1px solid #fff;border-top:1px solid #fff"></div><div class="a" style="right:5px;top:7px;border-left:4px solid transparent;border-right:4px solid transparent;border-top:4px solid #000;width:0;height:0"></div></div><div class="a" style="left:810px;top:80px;width:1px;height:22px;background:#b4b4b4"></div><div class="a" style="left:814px;top:80px;width:99px;height:19px;background:#fff;border:1px solid #a0a0a0"><div class="a" style="left:0;top:0;right:0;bottom:0;border-left:1px solid #696969;border-top:1px solid #696969"></div><div class="a" style="left:3px;top:2.5px;font-family:'Liberation Mono',monospace;font-size:11.5px;line-height:14px;letter-spacing:-1px">Model</div><div class="a" style="right:0;top:1px;width:17px;bottom:0;background:#f0f0f0;border-right:2px solid #696969;border-bottom:2px solid #696969;border-left:1px solid #fff;border-top:1px solid #fff"></div><div class="a" style="right:5px;top:7px;border-left:4px solid transparent;border-right:4px solid transparent;border-top:4px solid #000;width:0;height:0"></div></div><div class="grip" style="left:926px;top:81px;height:20px"></div><svg class="a" style="left:935px;top:85px" width="15" height="13" viewBox="0 0 15 13"><path d="M1.5 6V1.5H13.5V6" fill="none" stroke="#404040" stroke-dasharray="1 1"/><rect x="1.5" y="6.5" width="12" height="6" fill="#ffff40" stroke="#404040"/><path d="M0 6.5H15" stroke="#30b030" stroke-width="1.3"/></svg><svg class="a" style="left:958px;top:83px" width="15" height="15" viewBox="0 0 15 15"><path d="M1.5 8V4.5H11.5V8" fill="none" stroke="#a8a8a8" stroke-dasharray="1 1"/><rect x="1.5" y="8.5" width="10" height="6" fill="none" stroke="#a8a8a8" stroke-width="1.2"/><path d="M10.5 3H15M12.75 0.5V5.5" stroke="#a8a8a8" stroke-width="1.3"/></svg><div class="grip" style="left:988px;top:81px;height:20px"></div><svg class="a" style="left:998px;top:85px" width="17" height="15" viewBox="0 0 17 15"><path d="M4.5 5.5V1.5M4.5 5.5H8.5M4.5 5.5L1.5 8.5" stroke="#3030ff" stroke-width="1.2"/><path d="M3.0 2.0L4.5 0.5L6.0 2.0Z M8.0 4.0L9.5 5.5L8.0 7.0Z M1.0 7.0L0.5 9.5L3.0 9.0Z" fill="#3030ff"/><path d="M12 10.5V6.5M12 10.5H16.0M12 10.5L9.0 13.5" stroke="#3030ff" stroke-width="1.2"/><path d="M10.5 7.0L12 5.5L13.5 7.0Z M15.5 9.0L17.0 10.5L15.5 12.0Z M8.5 12.0L8.0 14.5L10.5 14.0Z" fill="#3030ff"/><path d="M5.5 5.5L10 9.5" stroke="#303030" stroke-width="1.2"/></svg><svg class="a" style="left:1022px;top:85px" width="14" height="15" viewBox="0 0 14 15"><path d="M6.5 7.5L2 3M6.5 7.5V14" stroke="#303030" stroke-width="1.2"/><path d="M1 2H4.5L1 5.5Z" fill="#303030"/><path d="M5 12.5L6.5 15L8 12.5Z" fill="#303030"/><path d="M6.5 7.5L11 3M6.5 7.5V1M6.5 7.5H12M6.5 7.5L3 11" stroke="#3030ff" stroke-width="1.2"/><path d="M5 2.5L6.5 0L8 2.5Z M11 6L13 7.5L11 9Z M9.5 1.5H12.5V4.5Z M2 9.5L2.5 12.5L4.5 11Z" fill="#3030ff"/></svg><svg class="a" style="left:1044px;top:85px" width="17" height="15" viewBox="0 0 17 15"><path d="M4.5 5V1.0M4.5 5H8.5M4.5 5L1.5 8.0" stroke="#3030ff" stroke-width="1.2"/><path d="M3.0 1.5L4.5 0.0L6.0 1.5Z M8.0 3.5L9.5 5L8.0 6.5Z M1.0 6.5L0.5 9.0L3.0 8.5Z" fill="#3030ff"/><path d="M6 6L11 10" stroke="#303030" stroke-width="1.2"/><path d="M10 8L12 10.5L9 11Z" fill="#303030"/><path d="M12 10.5L8 13M12 10.5L15 13M12 10.5H16" stroke="#3030ff" stroke-width="1.2"/><path d="M7 12L7.5 14.5L9.5 13.5Z M14 14L16.5 14L15 12Z" fill="#3030ff"/></svg><svg class="a" style="left:1067px;top:87px" width="14" height="9" viewBox="0 0 14 9"><rect x="0.7" y="2.7" width="12.6" height="5.6" fill="none" stroke="#a8a8a8" stroke-width="1.3"/><path d="M4 5.5V1H9V3M3 5.5H10" fill="none" stroke="#a8a8a8"/><path d="M9 4L10.5 5.5L9 7" fill="none" stroke="#a8a8a8"/></svg><svg class="a" style="left:1090px;top:84px" width="17" height="16" viewBox="0 0 17 16"><path d="M0.5 8.5L5 5.5L9.5 8.5V12.5L5 15.5L0.5 12.5Z" fill="#ffff40" stroke="#303030"/><path d="M0.5 8.5L5 11.5L9.5 8.5M5 11.5V15.5" fill="none" stroke="#303030"/><path d="M11 5.5L15 1.5" stroke="#303030" stroke-width="1.2"/><path d="M12.5 1H15.5V4Z M10.5 3.5V6.5H13.5Z" fill="#303030"/><path d="M4.5 8V1.5M4.5 8H9.5M4.5 8L1.5 10.5" stroke="#3030ff" stroke-width="1.2"/><path d="M3 2.5L4.5 0L6 2.5Z M8.5 6.5L10.5 8L8.5 9.5Z" fill="#3030ff"/></svg><svg class="a" style="left:1113px;top:84px" width="17" height="16" viewBox="0 0 17 16"><path d="M0.5 8.5L5 5.5L9.5 8.5V12.5L5 15.5L0.5 12.5Z" fill="#ffff40" stroke="#303030"/><path d="M0.5 8.5L5 11.5L9.5 8.5M5 11.5V15.5" fill="none" stroke="#303030"/><path d="M11 5.5L15 1.5" stroke="#303030" stroke-width="1.2"/><path d="M12.5 1H15.5V4Z M10.5 3.5V6.5H13.5Z" fill="#303030"/><path d="M14 7.5L5.5 12M14 7.5L16 10" stroke="#3030ff" stroke-width="1.2"/><path d="M4.5 12.5L6.5 10L7.5 13Z M14.5 10L16.5 11.5L16 9Z" fill="#3030ff"/></svg><svg class="a" style="left:1136px;top:84px" width="17" height="16" viewBox="0 0 17 16"><path d="M0.5 8.5L5 5.5L9.5 8.5V12.5L5 15.5L0.5 12.5Z" fill="#ffff40" stroke="#303030"/><path d="M0.5 8.5L5 11.5L9.5 8.5M5 11.5V15.5" fill="none" stroke="#303030"/><path d="M11 5.5L15 1.5" stroke="#303030" stroke-width="1.2"/><path d="M12.5 1H15.5V4Z M10.5 3.5V6.5H13.5Z" fill="#303030"/><path d="M5 11.5V1.5M5 11.5L1 14M5 11.5L9.5 14" stroke="#3030ff" stroke-width="1.2"/><path d="M3.5 2.5L5 0L6.5 2.5Z M0 12.5L0.5 15L2.5 14Z M8.5 12.5L10.5 15L11 13Z" fill="#3030ff"/></svg><div class="grip" style="left:0px;top:111px;height:20px"></div><svg class="a" style="left:9px;top:115px" width="17" height="16" viewBox="0 0 17 16"><g shape-rendering="crispEdges"><path d="M4 14H9L15 9H16V11L11 16H5L4 15Z" fill="#f33"/><path d="M5 0H12V4H15V11H10V14H2V11H0V4H5Z" fill="#33f"/><rect x="6" y="3" width="3" height="3" fill="#3ff"/><rect x="1" y="7" width="3" height="3" fill="#3ff"/><rect x="9" y="7" width="3" height="3" fill="#3ff"/><rect x="3" y="10" width="3" height="3" fill="#3ff"/><rect x="7" y="1" width="3" height="1" fill="#fff"/><rect x="2" y="5" width="3" height="1" fill="#fff"/><rect x="10" y="5" width="3" height="1" fill="#fff"/><rect x="6" y="8" width="1" height="1" fill="#fff"/><rect x="5" y="9" width="1" height="1" fill="#fff"/></g></svg><svg class="a" style="left:32px;top:114px" width="16" height="15" viewBox="0 0 16 15"><path d="M4 0.5L1 3V11L2.5 14.5" fill="none" stroke="#ff6030" stroke-width="1.3"/><path d="M11.5 0.5L14.5 3V11L13 14.5" fill="none" stroke="#ff6030" stroke-width="1.3"/><path d="M6 6.5L2.5 9.5L5 10.5" fill="#b0f0f0" stroke="#303060" stroke-width="0.9"/><path d="M9.5 6.5L13 9.5L10.5 10.5" fill="#b0f0f0" stroke="#303060" stroke-width="0.9"/><path d="M7.75 0.5Q6.5 2 6.5 5V11L4.5 14H11L9 11V5Q9 2 7.75 0.5Z" fill="#c0ffff" stroke="#303040" stroke-width="0.9"/><path d="M7 2H8.5V4H7Z" fill="#e8e060"/><path d="M5.5 13.5H10" stroke="#4030a0" stroke-width="1.2"/></svg>
<!-- LEFT PANELS -->
<div class="a" style="left:0;top:136px;width:1337px;height:1px;background:#fcfcfc"></div><div class="a" style="left:0;top:137px;width:316px;height:15px;border:1px solid #a0a0a0;border-left:none;border-radius:0 3px 3px 0;background:#f0f0f0"></div><div class="t" style="left:2px;top:138.5px;font-size:10.8px;line-height:12px">Project Manager</div><svg class="a" style="left:291px;top:141px" width="20" height="8"><path d="M1 5.5L3.5 2L6 5.5Z" fill="#000"/><path d="M13 1.2L18.5 6.5M18.5 1.2L13 6.5" stroke="#000" stroke-width="1.8"/></svg><div class="a" style="left:5px;top:156px;width:306px;height:174px;border:1px solid;border-color:#e3e3e3 #696969 #696969 #e3e3e3"></div><div class="a" style="left:8px;top:160px;width:299px;height:166px;background:#fff;border:2px solid;border-color:#696969 #e3e3e3 #e3e3e3 #696969;border-right-width:1px;border-bottom-width:1px"></div><div class="a" style="left:6px;top:329px;width:54px;height:18px;background:#f0f0f0;border-left:1px solid #fff;border-right:1px solid #696969;border-bottom:1px solid #696969;border-radius:0 0 2px 2px"></div><div class="t" style="left:12px;top:333px">Project</div><div class="pm" style="left:14px;top:170px"></div><div class="dh" style="left:23px;top:174px;width:6px"></div><div class="dv" style="left:37px;top:180px;height:37px"></div><div class="pm p" style="left:33px;top:191px"></div><div class="dh" style="left:42px;top:195px;width:6px"></div><div class="pm p" style="left:33px;top:212px"></div><div class="dh" style="left:42px;top:216px;width:6px"></div><svg class="a" style="left:29px;top:165px" width="16" height="15" shape-rendering="crispEdges"><rect x="2.5" y="0.5" width="13" height="12" fill="#fff" stroke="#008000"/><rect x="10" y="2" width="1" height="3" fill="#0f0"/><rect x="12" y="2" width="2" height="3" fill="#0f0"/><rect x="10" y="7" width="2" height="3" fill="#0f0"/><rect x="13" y="7" width="1" height="3" fill="#0f0"/><rect x="0.5" y="2.5" width="6" height="10" fill="#fff" stroke="#008000"/><rect x="2.5" y="4.5" width="6" height="10" fill="#fff" stroke="#008000"/><path d="M4 7.5h3M4 9.5h3M4 11.5h3" stroke="#0f0"/></svg><div class="a" style="left:48px;top:163px;width:54px;height:20px;background:#e8e8e8"></div><div class="t" style="left:50px;top:166px;font-weight:bold;font-size:12.4px">Project1</div><svg class="a" style="left:48px;top:188px" width="17" height="16" shape-rendering="crispEdges"><path d="M4 14H9L15 9H16V11L11 16H5L4 15Z" fill="#f00"/><path d="M5 0H12V4H15V11H9V14H2V11H0V4H5Z" fill="#00f"/><rect x="6" y="3" width="3" height="3" fill="#0ff"/><rect x="1" y="7" width="3" height="3" fill="#0ff"/><rect x="9" y="7" width="3" height="3" fill="#0ff"/><rect x="3" y="10" width="3" height="3" fill="#0ff"/><rect x="7" y="1" width="3" height="1" fill="#c0c0c0"/><rect x="3" y="5" width="2" height="1" fill="#c0c0c0"/><rect x="10" y="5" width="3" height="1" fill="#c0c0c0"/><rect x="6" y="8" width="1" height="1" fill="#c0c0c0"/><rect x="5" y="9" width="1" height="1" fill="#c0c0c0"/></svg><div class="t" style="left:69px;top:188px;font-weight:bold;font-size:12.9px;letter-spacing:0px">HFSSDesign1 (DrivenModal)</div><svg class="a" style="left:49px;top:210px" width="16" height="14" shape-rendering="crispEdges"><rect x="2" y="13" width="13" height="1" fill="#000"/><rect x="15" y="3" width="1" height="11" fill="#000"/><path d="M1 0H7V2H15V13H0V1Z" fill="#f4f4f4"/><rect x="1" y="1" width="6" height="2" fill="#e8e860"/><rect x="1" y="3" width="13" height="9" fill="#e8e860"/></svg><div class="t" style="left:69px;top:209.5px">Definitions</div><div class="a" style="left:0;top:357px;width:318px;height:1px;background:#fff"></div><div class="a" style="left:0;top:361px;width:318px;height:2px;background:#696969"></div><div class="a" style="left:320px;top:137px;width:1px;height:449px;background:#fff"></div><div class="a" style="left:0;top:365px;width:316px;height:15px;border:1px solid #a0a0a0;border-left:none;border-radius:0 3px 3px 0;background:#f0f0f0"></div><div class="t" style="left:2px;top:366.5px;font-size:10.8px;line-height:12px">Properties</div><svg class="a" style="left:291px;top:369px" width="20" height="8"><path d="M1 5.5L3.5 2L6 5.5Z" fill="#000"/><path d="M13 1.2L18.5 6.5M18.5 1.2L13 6.5" stroke="#000" stroke-width="1.8"/></svg><div class="a" style="left:5px;top:384px;width:306px;height:177px;border:1px solid;border-color:#e3e3e3 #696969 #696969 #e3e3e3"></div><div class="a" style="left:8px;top:388px;width:299px;height:169px;background:#fff;border:2px solid;border-color:#696969 #e3e3e3 #e3e3e3 #696969;border-right-width:1px;border-bottom-width:1px"></div><div class="a" style="left:6px;top:560px;width:64px;height:18px;background:#f0f0f0;border-left:1px solid #fff;border-right:1px solid #696969;border-bottom:1px solid #696969;border-radius:0 0 2px 2px"></div><div class="t" style="left:12px;top:563px">Attribute</div><div class="a" style="left:10px;top:390px;width:63px;height:20px;background:#f0f0f0;border-right:2px solid #808080;border-bottom:2px solid #696969;border-left:1px solid #fff;border-top:1px solid #fff"></div><div class="t" style="left:10px;width:63px;text-align:center;top:394px">Name</div><div class="a" style="left:73px;top:390px;width:71px;height:20px;background:#f0f0f0;border-right:2px solid #808080;border-bottom:2px solid #696969;border-left:1px solid #fff;border-top:1px solid #fff"></div><div class="t" style="left:73px;width:71px;text-align:center;top:394px">Value</div><div class="a" style="left:144px;top:390px;width:44px;height:20px;background:#f0f0f0;border-right:2px solid #808080;border-bottom:2px solid #696969;border-left:1px solid #fff;border-top:1px solid #fff"></div><div class="t" style="left:144px;width:44px;text-align:center;top:394px">Unit</div><div class="a" style="left:188px;top:390px;width:88px;height:20px;background:#f0f0f0;border-right:2px solid #808080;border-bottom:2px solid #696969;border-left:1px solid #fff;border-top:1px solid #fff"></div><div class="t" style="left:188px;width:88px;text-align:center;top:394px">Evaluated Va...</div><div class="a" style="left:276px;top:390px;width:12px;height:20px;background:#f0f0f0;border-right:2px solid #808080;border-bottom:2px solid #696969;border-left:1px solid #fff;border-top:1px solid #fff"></div><div class="a" style="left:10px;top:429px;width:266px;height:1px;background:#d0d0d0"></div><div class="t" style="left:12px;top:414px">Name</div><div class="t" style="left:76px;top:414px">Box3</div><div class="a" style="left:10px;top:449px;width:266px;height:1px;background:#d0d0d0"></div><div class="t" style="left:12px;top:434px">Material</div><div class="t" style="left:76px;top:434px">"air"</div><div class="t" style="left:191px;top:434px">"air"</div><div class="a" style="left:10px;top:469px;width:266px;height:1px;background:#d0d0d0"></div><div class="t" style="left:12px;top:454px">Solve In...</div><div class="a" style="left:101px;top:453px;width:14px;height:14px;background:#fff;border:1px solid;border-color:#808080 #e8e8e8 #e8e8e8 #808080"></div><svg class="a" style="left:104px;top:456px" width="9" height="8"><path d="M1 3.5l2.5 2.5 4.5-5" fill="none" stroke="#000" stroke-width="2"/></svg><div class="a" style="left:10px;top:489px;width:266px;height:1px;background:#d0d0d0"></div><div class="t" style="left:12px;top:474px">Orientati...</div><div class="t" style="left:76px;top:474px">Global</div><div class="a" style="left:10px;top:509px;width:266px;height:1px;background:#d0d0d0"></div><div class="t" style="left:12px;top:494px">Model</div><div class="a" style="left:101px;top:493px;width:14px;height:14px;background:#fff;border:1px solid;border-color:#808080 #e8e8e8 #e8e8e8 #808080"></div><svg class="a" style="left:104px;top:496px" width="9" height="8"><path d="M1 3.5l2.5 2.5 4.5-5" fill="none" stroke="#000" stroke-width="2"/></svg><div class="a" style="left:10px;top:529px;width:266px;height:1px;background:#d0d0d0"></div><div class="t" style="left:12px;top:514px">Display ...</div><div class="a" style="left:101px;top:513px;width:14px;height:14px;background:#fff;border:1px solid;border-color:#808080 #e8e8e8 #e8e8e8 #808080"></div><div class="a" style="left:10px;top:549px;width:266px;height:1px;background:#d0d0d0"></div><div class="t" style="left:12px;top:534px">Color</div><div class="a" style="left:80px;top:533px;width:58px;height:13px;background:#8080c0;border:1px solid #000"></div><div class="a" style="left:73px;top:410px;width:1px;height:148px;background:#d6d6d6"></div><div class="a" style="left:144px;top:410px;width:1px;height:148px;background:#d6d6d6"></div><div class="a" style="left:188px;top:410px;width:1px;height:148px;background:#d6d6d6"></div><div class="a" style="left:275px;top:410px;width:1px;height:148px;background:#d6d6d6"></div><div class="a" style="left:288px;top:390px;width:17px;height:167px;background:#f0f0f0"></div><svg class="a" style="left:291px;top:396px" width="11" height="8"><path d="M1.5 6l4-4 4 4" fill="none" stroke="#505050" stroke-width="2"/></svg><div class="a" style="left:289px;top:407px;width:15px;height:116px;background:#cdcdcd"></div><svg class="a" style="left:291px;top:545px" width="11" height="8"><path d="M1.5 1.5l4 4 4-4" fill="none" stroke="#505050" stroke-width="2"/></svg>
<!-- TREE -->
<div class="a" style="left:324px;top:137px;width:222px;height:449px;background:#fff;border-left:2px solid #696969;border-top:2px solid #696969;border-right:1px solid #e3e3e3;border-bottom:1px solid #e3e3e3"></div><div class="dv" style="left:334px;top:155px;height:155px"></div><div class="dv" style="left:353px;top:157px;height:72px"></div><div class="dv" style="left:372px;top:177px;height:8px"></div><div class="dv" style="left:391px;top:198px;height:11px"></div><div class="pm" style="left:330px;top:145px"></div><div class="dh" style="left:339px;top:149px;width:6px"></div><div class="pm" style="left:349px;top:165px"></div><div class="dh" style="left:358px;top:169px;width:6px"></div><div class="pm" style="left:368px;top:185px"></div><div class="dh" style="left:377px;top:189px;width:6px"></div><div class="pm p" style="left:349px;top:225px"></div><div class="dh" style="left:358px;top:229px;width:6px"></div><div class="pm p" style="left:330px;top:245px"></div><div class="dh" style="left:339px;top:249px;width:6px"></div><div class="pm p" style="left:330px;top:265px"></div><div class="dh" style="left:339px;top:269px;width:6px"></div><div class="pm p" style="left:330px;top:285px"></div><div class="dh" style="left:339px;top:289px;width:6px"></div><div class="pm p" style="left:330px;top:305px"></div><div class="dh" style="left:339px;top:309px;width:6px"></div><div class="dh" style="left:391px;top:209px;width:11px"></div><svg class="a" style="left:346px;top:143px" width="14" height="11" shape-rendering="crispEdges"><path d="M0 6L6 0H14V5L8 11H0Z" fill="#c0c0c0"/><rect x="6" y="0" width="7" height="1" fill="#8b0000"/><rect x="13" y="0" width="1" height="5" fill="#000"/><rect x="12" y="6" width="1" height="1" fill="#000"/><rect x="11" y="7" width="1" height="1" fill="#000"/><rect x="10" y="8" width="1" height="1" fill="#000"/><rect x="9" y="9" width="1" height="1" fill="#000"/><rect x="0" y="10" width="9" height="1" fill="#000"/><rect x="0" y="6" width="1" height="4" fill="#8b0000"/><rect x="7" y="6" width="1" height="4" fill="#8b0000"/></svg><div class="t" style="left:366px;top:142px;letter-spacing:-0.15px">Solids</div><svg class="a" style="left:364px;top:162px" width="17" height="14"><path d="M0.5 4.5L4.5 0.5H15.5L11.5 4.5Z" fill="#f00" stroke="#000"/><path d="M0.5 4.5H11.5V7.5H0.5Z" fill="#f00" stroke="#000"/><path d="M11.5 4.5L15.5 0.5V3.5L11.5 7.5Z" fill="#c00000" stroke="#000"/><path d="M0.5 9.5L4.5 5.5H15.5L11.5 9.5Z" fill="#00f" stroke="#000"/><path d="M0.5 9.5H11.5V12.5H0.5Z" fill="#0ff" stroke="#000"/><path d="M11.5 9.5L15.5 5.5V8.5L11.5 12.5Z" fill="#0000a0" stroke="#000"/></svg><div class="t" style="left:385px;top:162px;">air</div><svg class="a" style="left:384px;top:183px" width="14" height="11" shape-rendering="crispEdges"><path d="M0 6L6 0H14V5L8 11H0Z" fill="#c0c0c0"/><rect x="6" y="0" width="7" height="1" fill="#8b0000"/><rect x="13" y="0" width="1" height="5" fill="#000"/><rect x="12" y="6" width="1" height="1" fill="#000"/><rect x="11" y="7" width="1" height="1" fill="#000"/><rect x="10" y="8" width="1" height="1" fill="#000"/><rect x="9" y="9" width="1" height="1" fill="#000"/><rect x="0" y="10" width="9" height="1" fill="#000"/><rect x="0" y="6" width="1" height="4" fill="#8b0000"/><rect x="7" y="6" width="1" height="4" fill="#8b0000"/></svg><div class="a" style="left:402px;top:179px;width:33px;height:19px;background:#0078d7;outline:1px dotted #e08000;outline-offset:-1px"></div><div class="t" style="left:404px;top:182px;color:#fff">Box3</div><svg class="a" style="left:405px;top:201px" width="11" height="15"><path d="M0.5 3.5L6 0.5L9.5 3.5L3.5 6.5Z" fill="#ff0"/><path d="M0.5 3.5L3.5 6.5V13.5L0.5 10.5Z" fill="#8a8a00"/><path d="M3.5 6.5L9.5 3.5V10.5L3.5 13.5Z" fill="#fff"/><path d="M0.5 3.5L6 0.5L9.5 3.5V10.5L3.5 13.5L0.5 10.5Z M0.5 3.5L3.5 6.5L9.5 3.5M3.5 6.5V13.5" fill="none" stroke="#000" stroke-linejoin="round"/></svg><div class="t" style="left:423px;top:202px;">CreateBox</div><svg class="a" style="left:364px;top:222px" width="17" height="14"><path d="M0.5 4.5L4.5 0.5H15.5L11.5 4.5Z" fill="#f00" stroke="#000"/><path d="M0.5 4.5H11.5V7.5H0.5Z" fill="#f00" stroke="#000"/><path d="M11.5 4.5L15.5 0.5V3.5L11.5 7.5Z" fill="#c00000" stroke="#000"/><path d="M0.5 9.5L4.5 5.5H15.5L11.5 9.5Z" fill="#00f" stroke="#000"/><path d="M0.5 9.5H11.5V12.5H0.5Z" fill="#0ff" stroke="#000"/><path d="M11.5 9.5L15.5 5.5V8.5L11.5 12.5Z" fill="#0000a0" stroke="#000"/></svg><div class="t" style="left:385px;top:222px;">copper</div><svg class="a" style="left:346px;top:245px" width="15" height="9" shape-rendering="crispEdges"><rect x="0.5" y="0.5" width="13" height="7" fill="#c0c0c0" stroke="#000"/><path d="M0.5 7V0.5H13" fill="none" stroke="#8b0000"/></svg><div class="t" style="left:366px;top:242px;">Sheets</div><svg class="a" style="left:345px;top:261px" width="16" height="16"><path d="M2.5 2v12.5h11" fill="none" stroke="#000" stroke-width="1.2"/><path d="M0.5 4l2-3 2 3" fill="none" stroke="#000"/><path d="M2.5 14.5l7-7" stroke="#000" stroke-width="1.3"/><rect x="9" y="5" width="2.5" height="2.5" fill="#000"/><circle cx="13.5" cy="14.5" r="1.4" fill="#000"/></svg><div class="t" style="left:366px;top:262px;">Coordinate Systems</div><svg class="a" style="left:346px;top:284px" width="16" height="11" shape-rendering="crispEdges"><path d="M2 0H14V4L15 5V6L13 9V10H2L1 7L0 5L1 4L2 3Z" fill="#000"/><path d="M4 1h8M3 3h8M2 5h2M5 5h6M4 7h8M3 9h7" stroke="#fff" stroke-width="1" transform="translate(0,0.5)" opacity="0.9"/></svg><div class="t" style="left:366px;top:282px;">Planes</div><svg class="a" style="left:345px;top:302px" width="16" height="14"><path d="M0.5 8.5L6.5 1.5H13.5L15 3.5V6.5L9.5 12.5H2.5L0.5 10.5Z" fill="#c8d0d0" stroke="#8b0000"/><path d="M2 11L11 2M5 12L13 4M8 12L14 6" stroke="#8b0000" stroke-width="1.1"/><path d="M9.5 12.5L15 6.5V3.5" fill="none" stroke="#000"/></svg><div class="t" style="left:366px;top:302px;">Lists</div>
<!-- VIEW -->
<div class="a" style="left:549px;top:137px;width:788px;height:449px;background:#fff;border-left:2px solid #696969;border-top:2px solid #696969;border-bottom:1px solid #e3e3e3"></div><svg class="a" style="left:551px;top:139px" width="786" height="446" viewBox="0 0 786 446"><g stroke="#e4e4e4" stroke-width="1" shape-rendering="crispEdges"><line x1="0.00" y1="-131.11" x2="786.00" y2="8.01"/><line x1="0.00" y1="-114.43" x2="786.00" y2="24.69"/><line x1="0.00" y1="-81.07" x2="786.00" y2="58.05"/><line x1="0.00" y1="-64.39" x2="786.00" y2="74.73"/><line x1="0.00" y1="-47.71" x2="786.00" y2="91.41"/><line x1="0.00" y1="-31.03" x2="786.00" y2="108.09"/><line x1="0.00" y1="2.33" x2="786.00" y2="141.45"/><line x1="0.00" y1="19.01" x2="786.00" y2="158.13"/><line x1="0.00" y1="35.69" x2="786.00" y2="174.81"/><line x1="0.00" y1="52.37" x2="786.00" y2="191.49"/><line x1="0.00" y1="85.73" x2="786.00" y2="224.85"/><line x1="0.00" y1="102.41" x2="786.00" y2="241.53"/><line x1="0.00" y1="119.09" x2="786.00" y2="258.21"/><line x1="0.00" y1="135.77" x2="786.00" y2="274.89"/><line x1="0.00" y1="169.13" x2="786.00" y2="308.25"/><line x1="0.00" y1="185.81" x2="786.00" y2="324.93"/><line x1="0.00" y1="202.49" x2="786.00" y2="341.61"/><line x1="0.00" y1="219.17" x2="786.00" y2="358.29"/><line x1="0.00" y1="252.53" x2="786.00" y2="391.65"/><line x1="0.00" y1="269.21" x2="786.00" y2="408.33"/><line x1="0.00" y1="285.89" x2="786.00" y2="425.01"/><line x1="0.00" y1="302.57" x2="786.00" y2="441.69"/><line x1="0.00" y1="335.93" x2="786.00" y2="475.05"/><line x1="0.00" y1="352.61" x2="786.00" y2="491.73"/><line x1="0.00" y1="369.29" x2="786.00" y2="508.41"/><line x1="0.00" y1="385.97" x2="786.00" y2="525.09"/><line x1="0.00" y1="419.33" x2="786.00" y2="558.45"/><line x1="0.00" y1="436.01" x2="786.00" y2="575.13"/><line x1="1.61" y1="0.00" x2="-278.01" y2="446.00"/><line x1="32.88" y1="0.00" x2="-246.74" y2="446.00"/><line x1="64.15" y1="0.00" x2="-215.47" y2="446.00"/><line x1="126.69" y1="0.00" x2="-152.93" y2="446.00"/><line x1="157.96" y1="0.00" x2="-121.66" y2="446.00"/><line x1="189.23" y1="0.00" x2="-90.39" y2="446.00"/><line x1="220.50" y1="0.00" x2="-59.12" y2="446.00"/><line x1="283.04" y1="0.00" x2="3.42" y2="446.00"/><line x1="314.31" y1="0.00" x2="34.69" y2="446.00"/><line x1="345.58" y1="0.00" x2="65.96" y2="446.00"/><line x1="376.85" y1="0.00" x2="97.23" y2="446.00"/><line x1="439.39" y1="0.00" x2="159.77" y2="446.00"/><line x1="470.66" y1="0.00" x2="191.04" y2="446.00"/><line x1="501.93" y1="0.00" x2="222.31" y2="446.00"/><line x1="533.20" y1="0.00" x2="253.58" y2="446.00"/><line x1="595.74" y1="0.00" x2="316.12" y2="446.00"/><line x1="627.01" y1="0.00" x2="347.39" y2="446.00"/><line x1="658.28" y1="0.00" x2="378.66" y2="446.00"/><line x1="689.55" y1="0.00" x2="409.93" y2="446.00"/><line x1="752.09" y1="0.00" x2="472.47" y2="446.00"/><line x1="783.36" y1="0.00" x2="503.74" y2="446.00"/><line x1="814.63" y1="0.00" x2="535.01" y2="446.00"/><line x1="845.90" y1="0.00" x2="566.28" y2="446.00"/><line x1="908.44" y1="0.00" x2="628.82" y2="446.00"/><line x1="939.71" y1="0.00" x2="660.09" y2="446.00"/><line x1="970.98" y1="0.00" x2="691.36" y2="446.00"/><line x1="1002.25" y1="0.00" x2="722.63" y2="446.00"/><line x1="1064.79" y1="0.00" x2="785.17" y2="446.00"/></g><g stroke="#dcdcdc" stroke-width="2" shape-rendering="crispEdges"><line x1="0.00" y1="-97.75" x2="786.00" y2="41.37"/><line x1="0.00" y1="-14.35" x2="786.00" y2="124.77"/><line x1="0.00" y1="69.05" x2="786.00" y2="208.17"/><line x1="0.00" y1="152.45" x2="786.00" y2="291.57"/><line x1="0.00" y1="235.85" x2="786.00" y2="374.97"/><line x1="0.00" y1="319.25" x2="786.00" y2="458.37"/><line x1="0.00" y1="402.65" x2="786.00" y2="541.77"/></g><g stroke="#dcdcdc" stroke-width="1.6" shape-rendering="crispEdges"><line x1="95.42" y1="0.00" x2="-184.20" y2="446.00"/><line x1="251.77" y1="0.00" x2="-27.85" y2="446.00"/><line x1="408.12" y1="0.00" x2="128.50" y2="446.00"/><line x1="564.47" y1="0.00" x2="284.85" y2="446.00"/><line x1="720.82" y1="0.00" x2="441.20" y2="446.00"/><line x1="877.17" y1="0.00" x2="597.55" y2="446.00"/><line x1="1033.52" y1="0.00" x2="753.90" y2="446.00"/></g><polygon points="206.50,22.50 656.50,102.00 656.50,304.00 581.50,423.00 131.00,343.50 131.00,142.00" fill="#be00be"/><polygon points="581.50,222.50 656.50,102.00 656.50,304.00 581.50,423.00" fill="#ae00ae"/><polygon points="206.50,22.50 131.00,142.00 206.50,155.49" fill="#ad00ad"/><polyline points="206.50,22.50 206.50,224.00 656.50,304.00" fill="none" stroke="#c616c6" stroke-width="1"/><line x1="206.5" y1="224" x2="131" y2="343.5" stroke="#b808b8" stroke-width="1"/><polyline points="131.00,142.00 581.50,222.50 656.50,102.00" fill="none" stroke="#700070" stroke-width="1"/><line x1="581.5" y1="222.5" x2="581.5" y2="423" stroke="#700070" stroke-width="1"/><polygon points="206.50,22.50 656.50,102.00 656.50,304.00 581.50,423.00 131.00,343.50 131.00,142.00" fill="none" stroke="#780078" stroke-width="1"/><line x1="281.1" y1="102.5" x2="281.1" y2="169" stroke="#f040f0" stroke-width="1.5"/><line x1="281.1" y1="102.5" x2="281.1" y2="33" stroke="#ff0000" stroke-width="2"/><polygon points="281.10,21.50 285.60,36.00 276.60,36.00" fill="#e00000"/><line x1="281.1" y1="202.60000000000002" x2="281.1" y2="183" stroke="#e00000" stroke-width="1.5"/><polygon points="281.10,178.50 284.10,185.00 278.10,185.00" fill="#e00000"/><line x1="281.1" y1="202.60000000000002" x2="304" y2="206.60000000000002" stroke="#1010e0" stroke-width="1.5"/><polygon points="308.50,207.50 302.00,204.00 301.50,210.00" fill="#1010e0"/><line x1="281.1" y1="202.60000000000002" x2="274" y2="213" stroke="#107010" stroke-width="1.5"/><polygon points="272.00,216.00 271.00,210.00 277.00,213.00" fill="#107010"/><line x1="281.1" y1="202.60000000000002" x2="618.5" y2="262.8" stroke="#8a2ad0" stroke-width="1" opacity="0.5"/><line x1="281.1" y1="202.60000000000002" x2="244" y2="263.2" stroke="#5a6a3a" stroke-width="1" opacity="0.5"/><line x1="618.5" y1="262.8" x2="771" y2="289.6" stroke="#0000ff" stroke-width="2"/><polygon points="784.00,292.00 768.00,285.00 767.00,293.50" fill="#0000e0"/><line x1="244.10000000000002" y1="263.2" x2="149" y2="415" stroke="#108010" stroke-width="2"/><polygon points="143.50,424.00 146.00,412.00 153.00,416.00" fill="#107010"/></svg><div class="t" style="left:833px;top:150.5px;color:#ff0000;font-size:11px;line-height:11px">Z</div><div class="t" style="left:1331px;top:421px;color:#0000ff;font-size:11px;line-height:11px">Y</div><div class="a" style="left:796px;top:558px;width:149px;height:8px;background:#fff;border:1px solid #000"></div><div class="a" style="left:945px;top:558px;width:149px;height:8px;background:#000"></div><div class="t" style="left:793px;top:571px;font-size:12px;line-height:12px">0</div><div class="t" style="left:938px;top:571px;font-size:12px;line-height:12px">25</div><div class="t" style="left:1087px;top:571px;font-size:12px;line-height:12px">50 (mm)</div>
<!-- BOTTOM -->
<div class="a" style="left:0;top:589px;width:1337px;height:1px;background:#fafafa"></div><div class="a" style="left:0;top:590px;width:1337px;height:2px;background:#696969"></div><div class="a" style="left:0px;top:594px;width:13px;height:98px;background:#f0f0f0;border:1px solid #a0a0a0;border-left-color:#fff;border-radius:0 0 3px 3px"></div><svg class="a" style="left:3px;top:599px" width="8" height="22"><path d="M1 1l6 6M7 1l-6 6" stroke="#000" stroke-width="1.6"/><path d="M6 14l-4 3 4 3z" fill="#000"/></svg><div class="a" style="left:0px;top:622px;width:13px;height:66px;overflow:hidden"><div class="t" style="left:1px;top:66px;font-size:9.6px;line-height:12px;transform-origin:0 0;transform:rotate(-90deg)">Message Manager</div></div><div class="a" style="left:14px;top:595px;width:650px;height:96px;background:#fff;border:2px solid;border-color:#696969 #e3e3e3 #e3e3e3 #696969;border-right-width:1px;border-bottom-width:1px"></div><div class="a" style="left:670px;top:592px;width:2px;height:102px;background:#696969"></div><div class="a" style="left:674px;top:594px;width:14px;height:98px;background:#f0f0f0;border:1px solid #a0a0a0;border-left-color:#fff;border-radius:0 0 3px 3px"></div><svg class="a" style="left:677px;top:599px" width="8" height="22"><path d="M1 1l6 6M7 1l-6 6" stroke="#000" stroke-width="1.6"/><path d="M6 14l-4 3 4 3z" fill="#000"/></svg><div class="a" style="left:674px;top:640px;width:14px;height:48px;overflow:hidden"><div class="t" style="left:1px;top:48px;font-size:9.6px;line-height:12px;transform-origin:0 0;transform:rotate(-90deg)">Progress</div></div><div class="a" style="left:689px;top:595px;width:647px;height:96px;background:#fff;border:2px solid;border-color:#696969 #e3e3e3 #e3e3e3 #696969;border-right-width:1px;border-bottom-width:1px"></div><div class="a" style="left:1151px;top:638px;width:133px;height:42px;background:#0a9fc8"></div><div class="t" style="left:1181px;top:644px;font-family:'Liberation Mono',monospace;font-size:11px;line-height:12px;color:#0818e0">EDA手把手</div><div class="t" style="left:1158px;top:663px;font-family:'Liberation Mono',monospace;font-size:11.5px;line-height:12px;color:#60e830;letter-spacing:0.05px">www.mybesteda.com</div><div class="a" style="left:0;top:694px;width:1337px;height:1px;background:#a0a0a0"></div><div class="t" style="left:-1.5px;top:701px">1 objects are selected</div><div class="a" style="left:1217px;top:699px;width:28px;height:18px;border-left:1px solid #a0a0a0;border-top:1px solid #a0a0a0"></div><div class="a" style="left:1248px;top:699px;width:36px;height:18px;border-left:1px solid #a0a0a0;border-top:1px solid #a0a0a0"></div><div class="a" style="left:1287px;top:699px;width:34px;height:18px;border-left:1px solid #a0a0a0;border-top:1px solid #a0a0a0"></div><div class="t" style="left:1251px;top:701.5px">NUM</div><svg class="a" style="left:1325px;top:703px" width="12" height="12"><path d="M11 2L2 11M11 6L6 11M11 10L10 11" stroke="#a0a0a0" stroke-width="1"/></svg><svg class="a" style="left:445.6px;top:175.2px" width="30" height="30"><circle cx="15" cy="15" r="13.6" fill="#e84848"/></svg><svg class="a" style="left:1135.6px;top:21.299999999999997px" width="30" height="30"><circle cx="15" cy="15" r="13.6" fill="#e84848"/></svg><svg class="a" style="left:450px;top:178px" width="20" height="22"><path d="M5.5 9.5L11 4.5V19" fill="none" stroke="#fff" stroke-width="1.9" stroke-linejoin="round"/></svg><div class="t" style="left:1135.6px;width:30px;text-align:center;top:25.8px;font-size:20px;line-height:21px;color:#fff">2</div>
</body></html>
